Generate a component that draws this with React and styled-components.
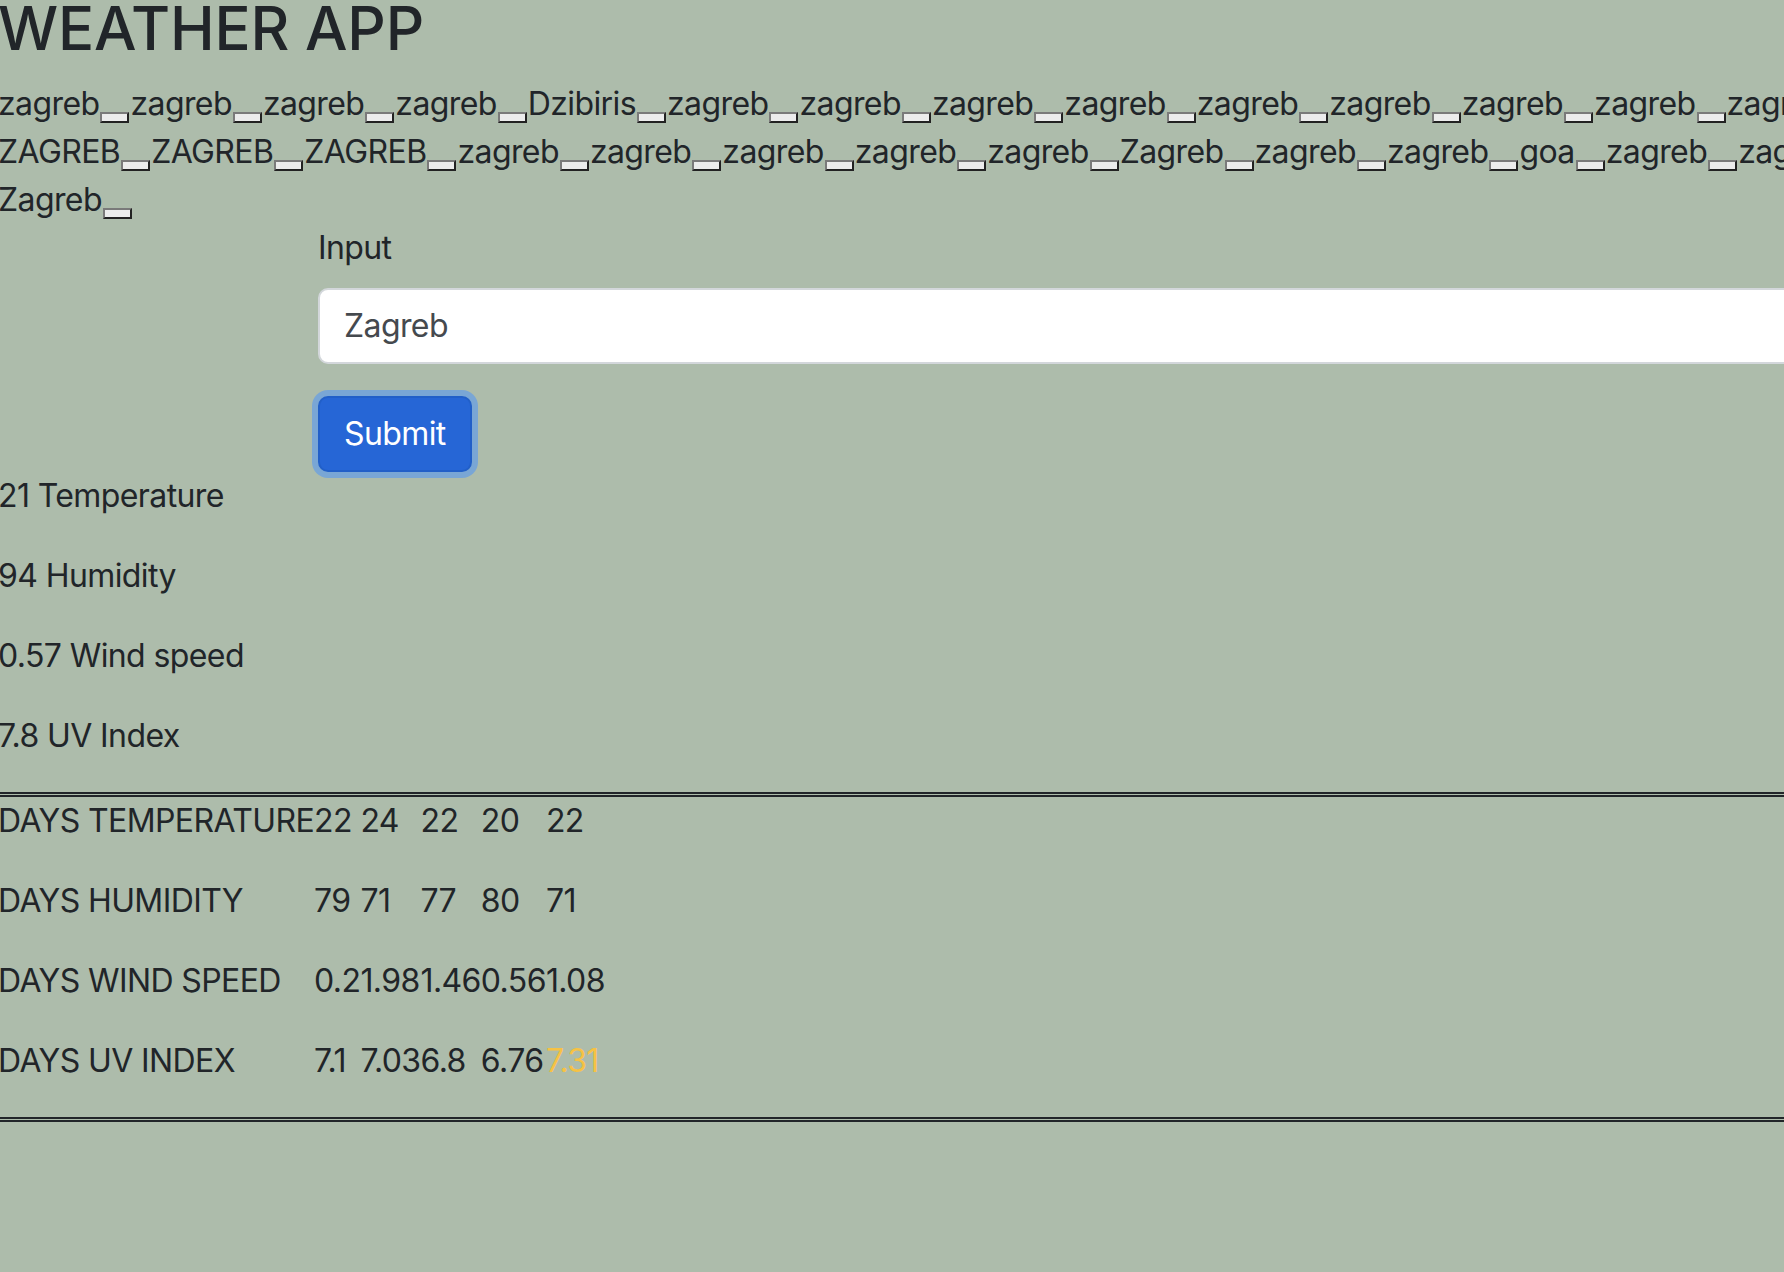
import React from 'react'
import styled, { createGlobalStyle } from 'styled-components'

const GlobalStyle = createGlobalStyle`
    html, body {
        margin: 0;
        padding: 0;
        background: #adbcab;
        overflow: hidden;
    }
    body {
        font-family: Inter, "Liberation Sans", sans-serif;
        font-size: 32px;
        line-height: 48px;
        letter-spacing: -0.6px;
        color: #212529;
    }
`

const Page = styled.div`
    margin-left: -2px;
    margin-top: -8px;
    width: 2060px;
`

const Title = styled.h1`
    margin: 0 0 16px 0;
    font-size: 60px;
    line-height: 72px;
    font-weight: 500;
    letter-spacing: -0.2px;
`

const History = styled.div`
    width: 2040px;
`

const Entry = styled.span`
    white-space: nowrap;
`

const Key = styled.span`
    display: inline-block;
    box-sizing: border-box;
    width: 29px;
    height: 11px;
    margin: 0 1px;
    vertical-align: -8px;
    background: #ececec;
    border: 2px solid;
    border-color: #7a7a7a #222 #222 #7a7a7a;
`

const Form = styled.form`
    margin: 0;
    padding-left: 320px;
    width: 1600px;
`

const Label = styled.label`
    display: block;
    margin-bottom: 16px;
`

const Input = styled.input`
    display: block;
    box-sizing: border-box;
    width: 100%;
    margin-bottom: 32px;
    padding: 12px 24px;
    font-family: inherit;
    font-size: 32px;
    line-height: 48px;
    letter-spacing: inherit;
    color: #45494e;
    background: #fff;
    border: 2px solid #d3d7db;
    border-radius: 10px;
    outline: none;
`

const SubmitButton = styled.button`
    display: block;
    padding: 12px 24px;
    font-family: inherit;
    font-size: 32px;
    line-height: 48px;
    letter-spacing: inherit;
    color: #fff;
    background: #2666d6;
    border: 2px solid #215fc8;
    border-radius: 10px;
    box-shadow: 0 0 0 6px #79a6d5;
`

const Stat = styled.p`
    margin: 0 0 32px 0;
`

const Forecast = styled.div`
    border-top: 5px double #212529;
    border-bottom: 5px double #212529;
`

const Table = styled.table`
    border-collapse: collapse;
`

const RowLabel = styled.th`
    padding: 0 0 32px 0;
    text-align: left;
    font-weight: 400;
    white-space: nowrap;
    vertical-align: top;
`

const Cell = styled.td`
    padding: 0 0 32px 0;
    white-space: nowrap;
    vertical-align: top;
    color: ${p => (p.warn ? '#f6c244' : 'inherit')};
`

const history = [
    ['zagreb', 'zagreb', 'zagreb', 'zagreb', 'Dzibiris', 'zagreb', 'zagreb', 'zagreb', 'zagreb',
     'zagreb', 'zagreb', 'zagreb', 'zagreb', 'zagreb', 'zagreb'],
    ['ZAGREB', 'ZAGREB', 'ZAGREB', 'zagreb', 'zagreb', 'zagreb', 'zagreb', 'zagreb', 'Zagreb',
     'zagreb', 'zagreb', 'goa', 'zagreb', 'zagreb', 'zagreb', 'Zagreb'],
].flat()

const stats = ['21 Temperature', '94 Humidity', '0.57 Wind speed', '7.8 UV Index']

const days = [
    { label: 'DAYS TEMPERATURE', values: ['22', '24', '22', '20', '22'] },
    { label: 'DAYS HUMIDITY', values: ['79', '71', '77', '80', '71'] },
    { label: 'DAYS WIND SPEED', values: ['0.2', '1.98', '1.46', '0.56', '1.08'] },
    { label: 'DAYS UV INDEX', values: ['7.1', '7.03', '6.8', '6.76', '7.31'] },
]

export default function App() {
    return (
        <Page>
            <GlobalStyle />
            <Title>WEATHER APP</Title>
            <History>
                {history.map((city, i) => (
                    <Entry key={i}>{city}<Key /></Entry>
                ))}
            </History>
            <Form onSubmit={e => e.preventDefault()}>
                <Label htmlFor="city">Input</Label>
                <Input id="city" defaultValue="Zagreb" />
                <SubmitButton type="submit">Submit</SubmitButton>
            </Form>
            {stats.map(s => (
                <Stat key={s}>{s}</Stat>
            ))}
            <Forecast>
                <Table>
                    <tbody>
                        {days.map(row => (
                            <tr key={row.label}>
                                <RowLabel>{row.label}</RowLabel>
                                {row.values.map((v, i) => (
                                    <Cell key={i} warn={row.label === 'DAYS UV INDEX' && i === 4}>{v}</Cell>
                                ))}
                            </tr>
                        ))}
                    </tbody>
                </Table>
            </Forecast>
        </Page>
    )
}
